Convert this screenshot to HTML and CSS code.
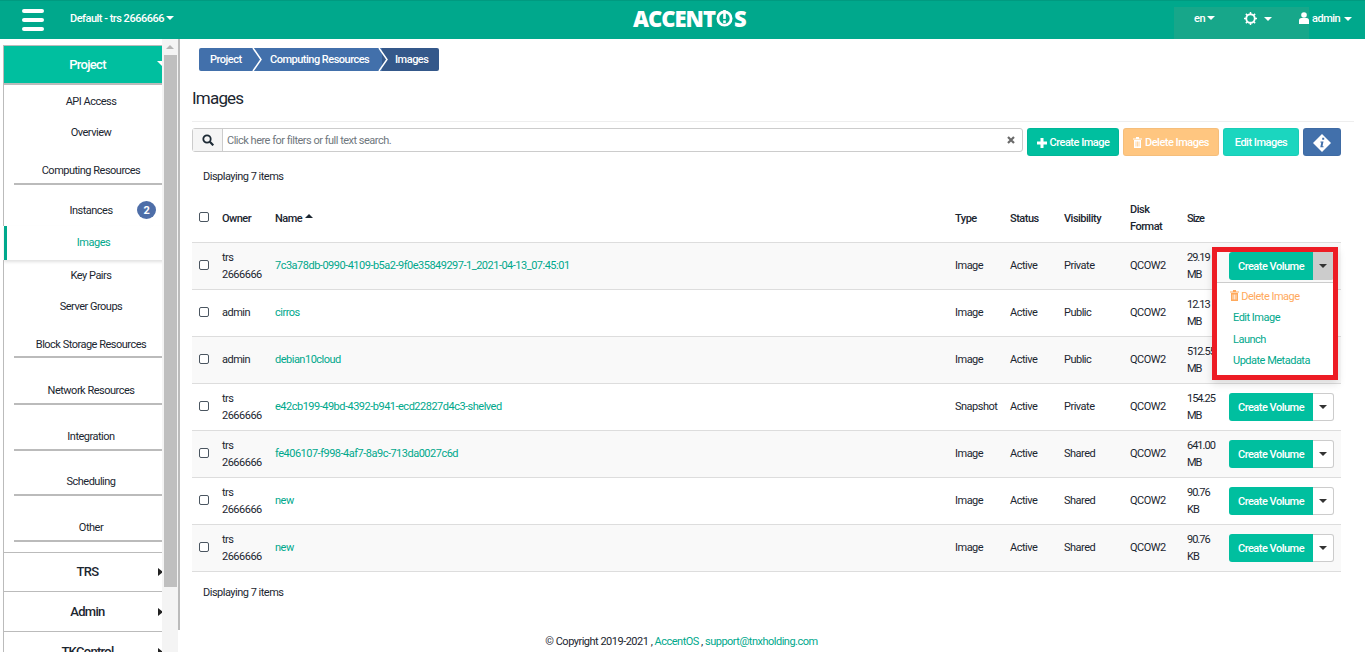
FILE: index.html
```html
<!DOCTYPE html>
<html lang="en">
<head>
<meta charset="utf-8">
<title>Images</title>
<link rel="stylesheet" href="styles.css">
</head>
<body>
<header class="topbar">
  <div class="burger"><i></i><i></i><i></i></div>
  <div class="project-switch">Default - trs 2666666 <span class="caret"></span></div>
  <div class="logo">ACCENT<svg class="logo-o" viewBox="0 0 18 18"><circle cx="9" cy="9" r="7" fill="none" stroke="#fff" stroke-width="3"/><rect x="7.6" y="0" width="2.8" height="9.5" fill="#fff"/><rect x="7.6" y="11" width="2.8" height="2.8" fill="#fff"/></svg>S</div>
  <div class="top-right">
    <div class="top-patch">
      <span class="lang">en <span class="caret"></span></span>
      <svg class="gear" viewBox="0 0 14 14"><circle cx="7" cy="7" r="4.6" fill="none" stroke="#fff" stroke-width="2"/><path d="M7 0v2.5M7 11.5V14M0 7h2.5M11.5 7H14M2 2l1.8 1.8M10.2 10.2L12 12M2 12l1.8-1.8M10.2 3.800L12 2" stroke="#fff" stroke-width="1.600"/></svg>
      <span class="caret gear-caret"></span>
    </div>
    <div class="user">
      <svg class="user-icon" viewBox="0 0 10 12"><circle cx="5" cy="3" r="2.800" fill="#fff"/><path d="M0 12V8.500Q0 6 2.500 6h5Q10 6 10 8.500V12z" fill="#fff"/></svg>
      <span>admin</span> <span class="caret"></span>
    </div>
  </div>
</header>
<div class="layout">
  <nav class="sidebar">
    <div class="nav-head">Project<span class="head-caret"></span></div>
    <a class="nav-item h32">API Access</a>
    <a class="nav-item h30">Overview</a>
    <a class="nav-sec s38">Computing Resources</a>
    <a class="nav-item inst">Instances<span class="badge">2</span></a>
    <a class="nav-item active">Images</a>
    <a class="nav-item h31">Key Pairs</a>
    <a class="nav-item h30">Server Groups</a>
    <a class="nav-sec s37">Block Storage Resources</a>
    <a class="nav-sec s47">Network Resources</a>
    <a class="nav-sec s46">Integration</a>
    <a class="nav-sec s45">Scheduling</a>
    <a class="nav-sec s46 last">Other</a>
    <div class="nav-group">TRS<span class="side-caret"></span></div>
    <div class="nav-group">Admin<span class="side-caret"></span></div>
    <div class="nav-group">TKControl<span class="side-caret"></span></div>
    <div class="scroll"><span class="scroll-up"></span><span class="scroll-thumb"></span></div>
  </nav>
  <div class="content">
    <main class="main">
      <ol class="crumbs">
        <li class="crumb first">Project</li>
        <li class="sep"><svg viewBox="0 0 14 23"><path d="M3 0l8 11.500L3 23" fill="none" stroke="#fff" stroke-width="1.500"/></svg></li>
        <li class="crumb mid">Computing Resources</li>
        <li class="sep two"><svg viewBox="0 0 14 23"><path d="M3 0l8 11.500L3 23" fill="none" stroke="#fff" stroke-width="1.500"/></svg></li>
        <li class="crumb cur">Images</li>
      </ol>
      <h1 class="title">Images</h1>
      <div class="toolbar">
        <div class="search">
          <span class="addon"><svg class="ico-search" viewBox="0 0 12 12"><circle cx="5" cy="5" r="3.700" fill="none" stroke="#1d2a35" stroke-width="1.800"/><path d="M7.800 7.800L11.300 11.300" stroke="#1d2a35" stroke-width="2.200"/></svg></span>
          <span class="search-input">Click here for filters or full text search.</span>
          <svg class="ico-x" viewBox="0 0 8 8"><path d="M1 1l6 6M7 1L1 7" stroke="#6b6b6b" stroke-width="2.200"/></svg>
        </div>
        <button class="btn b-create"><svg class="ico-plus" viewBox="0 0 10 10"><path d="M5 0v10M0 5h10" stroke="#fff" stroke-width="3"/></svg> Create Image</button>
        <button class="btn b-delete"><svg class="ico-trash" viewBox="0 0 9 11"><path d="M0 1.500h9v1H0zM3 0h3v1.500H3zM1 3h7v8H1z" fill="#fff"/><path d="M3 4.500v5M4.500 4.500v5M6 4.500v5" stroke="#ffc680" stroke-width=".7"/></svg> Delete Images</button>
        <button class="btn b-edit">Edit Images</button>
        <button class="btn b-info"><svg class="ico-info" viewBox="0 0 18 18"><path d="M9 0l9 9-9 9-9-9z" fill="#fff"/><path d="M9.200 3.800h2v2h-2zM7.500 7.500h3L9.500 12.300h1v1h-3.200l1-4.800h-1z" fill="#4270ab"/></svg></button>
      </div>
      <div class="count">Displaying 7 items</div>
      <table class="grid">
        <colgroup><col class="c-check"><col class="c-owner"><col class="c-name"><col class="c-type"><col class="c-status"><col class="c-vis"><col class="c-disk"><col class="c-size"><col class="c-act"></colgroup>
        <thead>
          <tr><th><input type="checkbox" class="chk"></th><th>Owner</th><th>Name <span class="sort"></span></th><th>Type</th><th>Status</th><th>Visibility</th><th>Disk Format</th><th>Size</th><th></th></tr>
        </thead>
        <tbody>
          <tr><td><input type="checkbox" class="chk"></td><td>trs 2666666</td><td><a class="link">7c3a78db-0990-4109-b5a2-9f0e35849297-1_2021-04-13_07:45:01</a></td><td>Image</td><td>Active</td><td>Private</td><td>QCOW2</td><td>29.19 MB</td><td>
            <div class="split">
              <button class="vol">Create Volume</button><button class="more open"><span class="caret dark"></span></button>
              <div class="popup">
                <ul class="menu">
                  <li class="danger"><svg class="ico-trash-o" viewBox="0 0 9 11"><path d="M0 1.500h9v1H0zM3 0h3v1.500H3zM1 3h7v8H1z" fill="#ffa95c"/><path d="M3 4.500v5M4.500 4.500v5M6 4.500v5" stroke="#fff" stroke-width=".7"/></svg> Delete Image</li>
                  <li>Edit Image</li>
                  <li>Launch</li>
                  <li>Update Metadata</li>
                </ul>
              </div>
            </div>
          </td></tr>
          <tr><td><input type="checkbox" class="chk"></td><td>admin</td><td><a class="link">cirros</a></td><td>Image</td><td>Active</td><td>Public</td><td>QCOW2</td><td>12.13 MB</td><td></td></tr>
          <tr><td><input type="checkbox" class="chk"></td><td>admin</td><td><a class="link">debian10cloud</a></td><td>Image</td><td>Active</td><td>Public</td><td>QCOW2</td><td>512.55 MB</td><td></td></tr>
          <tr><td><input type="checkbox" class="chk"></td><td>trs 2666666</td><td><a class="link">e42cb199-49bd-4392-b941-ecd22827d4c3-shelved</a></td><td>Snapshot</td><td>Active</td><td>Private</td><td>QCOW2</td><td>154.25 MB</td><td><div class="split"><button class="vol">Create Volume</button><button class="more"><span class="caret dark"></span></button></div></td></tr>
          <tr><td><input type="checkbox" class="chk"></td><td>trs 2666666</td><td><a class="link">fe406107-f998-4af7-8a9c-713da0027c6d</a></td><td>Image</td><td>Active</td><td>Shared</td><td>QCOW2</td><td>641.00 MB</td><td><div class="split"><button class="vol">Create Volume</button><button class="more"><span class="caret dark"></span></button></div></td></tr>
          <tr><td><input type="checkbox" class="chk"></td><td>trs 2666666</td><td><a class="link">new</a></td><td>Image</td><td>Active</td><td>Shared</td><td>QCOW2</td><td>90.76 KB</td><td><div class="split"><button class="vol">Create Volume</button><button class="more"><span class="caret dark"></span></button></div></td></tr>
          <tr><td><input type="checkbox" class="chk"></td><td>trs 2666666</td><td><a class="link">new</a></td><td>Image</td><td>Active</td><td>Shared</td><td>QCOW2</td><td>90.76 KB</td><td><div class="split"><button class="vol">Create Volume</button><button class="more"><span class="caret dark"></span></button></div></td></tr>
        </tbody>
      </table>
      <div class="count after">Displaying 7 items</div>
    </main>
    <footer class="foot">© Copyright 2019-2021 , <a class="link">AccentOS</a> , <a class="link">support@tnxholding.com</a></footer>
  </div>
</div>
</body>
</html>
```
FILE: styles.css
```css
* { box-sizing: border-box; }
html, body { margin: 0; height: 652px; overflow: hidden; background: #fff; }
body { font-family: Roboto, "Liberation Sans", sans-serif; font-size: 11px; letter-spacing: -.5px; color: #1b2630; }
ol, ul { list-style: none; margin: 0; padding: 0; }

.caret { display: inline-block; width: 0; height: 0; border-left: 4px solid transparent; border-right: 4px solid transparent; border-top: 4px solid #fff; vertical-align: 2px; }
.caret.dark { border-top-color: #333; }

/* top bar */
.topbar { height: 39px; background: #00a88c; border-top: 1px solid #009a80; display: flex; align-items: flex-start; position: relative; color: #fff; }
.burger { margin: 8px 0 0 22px; width: 22px; display: flex; flex-direction: column; gap: 5px; }
.burger i { display: block; height: 4px; border-radius: 2px; background: #fff; }
.project-switch { margin: 11px 0 0 26px; line-height: 14px; font-weight: 500; }
.logo { position: absolute; left: 633px; top: 5px; font-family: "Open Sans", sans-serif; font-weight: 800; font-size: 22px; line-height: 24px; letter-spacing: -1px; display: flex; align-items: center; }
.logo-o { width: 17px; height: 17px; margin: 0 1px; }
.top-right { margin-left: auto; display: flex; height: 38px; }
.top-patch { margin-top: 6px; width: 135px; height: 32px; background: #17a78a; display: flex; align-items: flex-start; padding: 4px 0 0 20px; line-height: 14px; font-weight: 500; }
.lang { width: 50px; margin-top: 1px; }
.gear { width: 13px; height: 13px; margin-top: 1px; }
.gear-caret { margin: 6px 0 0 7px; }
.user { width: 56px; display: flex; align-items: flex-start; gap: 3px; padding: 11px 0 0 0; line-height: 14px; font-weight: 500; }
.user .caret { margin: 5px 0 0 1px; }
.user-icon { width: 10px; height: 12px; margin-left: -10px; }

/* layout */
.layout { display: flex; height: 613px; }

/* sidebar */
.sidebar { margin-left: 3px; width: 175px; height: 613px; overflow: hidden; position: relative; padding-top: 6px; flex: none; }
.nav-head { height: 40px; background: #00bf9f; border: 1px solid #bbb; border-width: 1px 0 2px 1px; color: #fff; font-size: 13px; letter-spacing: -.7px; font-weight: 500; display: flex; align-items: center; justify-content: center; padding-right: 7px; position: relative; }
.head-caret { position: absolute; left: 153px; top: 15px; border-left: 5px solid transparent; border-right: 5px solid transparent; border-top: 5px solid #fff; }
.nav-item, .nav-sec { display: flex; align-items: center; justify-content: center; border-left: 1px solid #bbb; color: #1b2630; position: relative; }
.h32 { height: 32px; }
.h30 { height: 30px; }
.h31 { height: 31px; }
.inst { height: 41px; padding-top: 9px; }
.badge { position: absolute; left: 133px; top: 16px; width: 19px; height: 18px; border-radius: 50%; background: #4e6ea8; color: #fff; font-weight: 700; font-size: 11px; display: flex; align-items: center; justify-content: center; }
.active { height: 34px; padding-bottom: 2px; color: #00a88c; border-left: 3px solid #00a88c; box-shadow: 0 2px 3px rgba(0,0,0,.12); padding-left: 2px; margin-left: 1px; background: #fff; }
.nav-sec { align-items: flex-end; background: linear-gradient(#bbb,#bbb) 10px 100%/100% 2px no-repeat; padding-bottom: 8px; }
.s38 { height: 38px; }
.s37 { height: 37px; padding-bottom: 7px; }
.s47 { height: 47px; }
.s46 { height: 46px; }
.s45 { height: 45px; }
.nav-group { height: 40px; border: 1px solid #bbb; border-width: 0 0 1px 1px; color: #1b2630; font-size: 13px; letter-spacing: -.7px; font-weight: 500; display: flex; align-items: center; justify-content: center; padding-right: 7px; position: relative; }
.last + .nav-group { height: 50px; padding-top: 10px; background: linear-gradient(#bbb,#bbb) 0 10px/100% 1px no-repeat; }
.side-caret { position: absolute; left: 154px; top: 50%; margin-top: -4px; border-top: 4px solid transparent; border-bottom: 4px solid transparent; border-left: 5px solid #222; }
.last + .nav-group .side-caret { margin-top: 1px; }
.scroll { position: absolute; left: 159px; top: 0; width: 16px; height: 613px; background: #f4f4f4; display: flex; flex-direction: column; align-items: center; }
.scroll-up { margin-top: 6px; border-left: 4px solid transparent; border-right: 4px solid transparent; border-bottom: 4px solid #b5b5b5; }
.scroll-thumb { margin-top: 6px; width: 13px; height: 532px; background: #bfbfbf; }

/* content */
.content { flex: 1; min-width: 0; }
.main { height: 591px; border-left: 2px solid #bbb; padding: 9px 11px 0 12px; }
.crumbs { display: flex; height: 23px; margin-left: 7px; color: #fff; font-weight: 500; line-height: 23px; width: 240px; white-space: nowrap; }
.crumb { background: #4270ab; }
.crumb.first { width: 51px; padding-left: 11px; border-radius: 2px 0 0 2px; }
.crumb.mid { width: 112px; padding-left: 6px; }
.crumb.cur { width: 49px; background: #34588a; padding-left: 5px; border-radius: 0 2px 2px 0; }
.sep { width: 14px; height: 23px; background: #4270ab; }
.sep.two { background: linear-gradient(90deg,#4270ab 45%,#34588a 45%); }
.sep svg { display: block; width: 14px; height: 23px; }
.title { margin: 17px 0 0; font-size: 17px; letter-spacing: -.8px; font-weight: 400; line-height: 20px; height: 34px; border-bottom: 1px solid #eee; color: #1b2630; }
.toolbar { display: flex; gap: 4px; margin-top: 6px; height: 28px; align-items: flex-start; width: 1149px; }
.search { width: 831px; height: 24px; border: 1px solid #ccc; border-radius: 3px; display: flex; align-items: center; }
.addon { width: 30px; height: 22px; background: #f5f5f5; border-right: 1px solid #ccc; display: flex; align-items: center; justify-content: center; flex: none; }
.ico-search { width: 12px; height: 12px; }
.search-input { flex: 1; padding: 1px 0 0 4px; color: #6f777d; }
.ico-x { width: 8px; height: 8px; margin-right: 7px; }
.btn { height: 28px; border: 1px solid rgba(0,0,0,.04); border-radius: 3px; color: #fff; font: 500 11px Roboto, "Liberation Sans", sans-serif; letter-spacing: -.5px; padding: 1px 0 0; display: flex; align-items: center; justify-content: center; gap: 3px; }
.b-create { width: 92px; background: #00bf9f; }
.b-delete { width: 96px; background: #ffc680; }
.b-edit { width: 76px; background: #1bd6bf; }
.b-info { width: 38px; background: #4270ab; }
.ico-plus { width: 10px; height: 10px; }
.ico-trash { width: 9px; height: 11px; }
.ico-info { width: 18px; height: 18px; }
.count { margin: 14px 0 0 11px; line-height: 14px; height: 14px; }
.count.after { margin-top: 14px; }

/* table */
.grid { width: 1149px; border-collapse: collapse; table-layout: fixed; margin-top: 11px; }
.c-check { width: 30px; } .c-owner { width: 53px; } .c-name { width: 680px; } .c-type { width: 55px; } .c-status { width: 54px; } .c-vis { width: 66px; } .c-disk { width: 57px; } .c-size { width: 42px; } .c-act { width: 112px; }
.grid th { height: 47px; text-align: left; font-weight: 500; padding: 0 8px 0 0; line-height: 17px; border-bottom: 1px solid #ddd; }
.grid td { height: 47px; padding: 0 8px 0 0; line-height: 17px; border-bottom: 1px solid #ddd; vertical-align: middle; }
.grid th:nth-child(8), .grid td:nth-child(8) { padding-right: 8px; letter-spacing: -1px; }
.grid th:first-child, .grid td:first-child { padding-left: 7px; }
.grid th:last-child, .grid td:last-child { padding-right: 0; }
.grid tbody tr:nth-child(odd) { background: #f9f9f9; }
.chk { appearance: none; -webkit-appearance: none; display: block; width: 10px; height: 10px; margin: -1px 0 1px; border: 1.500px solid #4a5560; border-radius: 2px; background: #fff; }
.sort { display: inline-block; border-left: 4px solid transparent; border-right: 4px solid transparent; border-bottom: 4px solid #1b2630; vertical-align: 4px; margin-left: 1px; }
.link { color: #00a88c; text-decoration: none; }
.split { display: flex; position: relative; width: 105px; height: 28px; }
.vol { width: 84px; height: 28px; background: #00bf9f; border: 0; border-radius: 3px 0 0 3px; color: #fff; font: 500 11px Roboto, "Liberation Sans", sans-serif; letter-spacing: -.5px; padding: 1px 0 0; }
.more { width: 21px; height: 28px; background: #fff; border: 1px solid #ccc; border-left: 0; border-radius: 0 3px 3px 0; padding: 0; }
.more.open { background: #ccc; }

/* open menu + red annotation */
.popup { position: absolute; left: -17px; top: -5px; width: 126px; height: 133px; border: 5px solid #ed1c24; padding-top: 30px; z-index: 3; box-shadow: 0 4px 8px rgba(0,0,0,.12); }
.menu { background: #fff; border-top: 1px solid #ccc; height: 93px; padding: 3.400px 0 0 16px; }
.menu li { height: 21.500px; line-height: 21px; color: #00a88c; }
.menu .danger { color: #ffa95c; margin-left: -3px; }
.ico-trash-o { width: 9px; height: 11px; vertical-align: -1px; }

.foot { padding: 5px 180px 0 0; text-align: center; line-height: 14px; }
```
